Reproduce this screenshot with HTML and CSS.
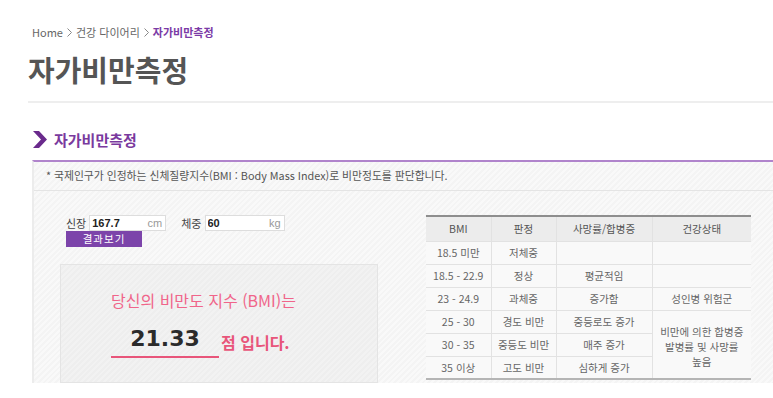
FILE: index.html
```html
<!DOCTYPE html>
<html lang="ko">
    <head>
        <meta charset="UTF-8" />
        <meta name="viewport" content="width=device-width, initial-scale=1.0" />
        <title>자가비만측정</title>
        <link rel="stylesheet" href="styles.css">
    </head>
    <body>
        <div class="page">
            <div class="breadcrumb">
                <span>Home</span>
                <svg class="sep" width="5" height="9" viewBox="0 0 5 9"><polyline points="0.5,0.5 4.5,4.5 0.5,8.5" fill="none" stroke="#888" stroke-width="1"></polyline></svg>
                <span>건강 다이어리</span>
                <svg class="sep" width="5" height="9" viewBox="0 0 5 9"><polyline points="0.5,0.5 4.5,4.5 0.5,8.5" fill="none" stroke="#888" stroke-width="1"></polyline></svg>
                <strong>자가비만측정</strong>
            </div>
            <h1 class="page-title">자가비만측정</h1>

            <div class="section">
                <h2 class="section-title">
                    <svg width="14" height="17" viewBox="0 0 14 17">
                        <polygon points="0,0 6,0 14,8.5 6,17 0,17 8,8.5" fill="#6a2a8c"></polygon>
                    </svg>
                    자가비만측정
                </h2>
                <div class="panel">
                    <p class="notice">* 국제인구가 인정하는 신체질량지수(BMI : Body Mass Index)로 비만정도를 판단합니다.</p>
                    <div class="panel-body">
                        <div class="calc">
                            <div class="form">
                                <div class="fields">
                                    <label>신장</label>
                                    <div class="field"><input type="text" value="167.7"><span class="unit">cm</span></div>
                                    <label class="gap">체중</label>
                                    <div class="field wide"><input type="text" value="60"><span class="unit">kg</span></div>
                                </div>
                                <button class="btn">결과보기</button>
                            </div>
                            <div class="result">
                                <p class="result-lead">당신의 비만도 지수 (BMI)는</p>
                                <p class="result-line"><span class="score">21.33</span><span class="tail">점 입니다.</span></p>
                            </div>
                        </div>

                        <table class="bmi-table">
                            <thead>
                                <tr>
                                    <th class="c1">BMI</th>
                                    <th class="c2">판정</th>
                                    <th class="c3">사망률/합병증</th>
                                    <th class="c4">건강상태</th>
                                </tr>
                            </thead>
                            <tbody>
                                <tr><td>18.5 미만</td><td>저체중</td><td></td><td></td></tr>
                                <tr><td>18.5 - 22.9</td><td>정상</td><td>평균적임</td><td></td></tr>
                                <tr><td>23 - 24.9</td><td>과체중</td><td>증가함</td><td>성인병 위험군</td></tr>
                                <tr><td>25 - 30</td><td>경도 비만</td><td>중등로도 증가</td><td rowspan="3">비만에 의한 합병증<br>발병률 및 사망률<br>높음</td></tr>
                                <tr><td>30 - 35</td><td>중등도 비만</td><td>매주 증가</td></tr>
                                <tr><td>35 이상</td><td>고도 비만</td><td>심하게 증가</td></tr>
                            </tbody>
                        </table>
                    </div>
                </div>
            </div>
        </div>
    </body>
</html>
```

FILE: styles.css
```css
*,
*::before,
*::after {
    box-sizing: border-box;
}

body {
    margin: 0;
    background: #fff;
    font-family: "Noto Sans CJK KR", "Noto Sans", sans-serif;
    color: #555;
    overflow: hidden;
}

.page {
    padding: 24px 0 0 28px;
}

.breadcrumb {
    display: flex;
    align-items: center;
    gap: 4px;
    padding-left: 4px;
    height: 16px;
    font-size: 11px;
    line-height: 16px;
    color: #666;
}
.breadcrumb strong {
    color: #7b3aa6;
}

.page-title {
    margin: 9px 0 0;
    padding-bottom: 12px;
    font-size: 29px;
    line-height: 40px;
    font-weight: 700;
    color: #555;
    border-bottom: 2px solid #eee;
}

.section {
    padding: 24px 0 0 4px;
}

.section-title {
    display: flex;
    align-items: center;
    gap: 7px;
    margin: 0;
    padding-left: 1px;
    height: 24px;
    font-size: 15px;
    font-weight: 700;
    color: #7a3a9e;
}

.panel {
    margin-top: 9px;
    border-top: 2px solid #b084cc;
    border-left: 2px solid #ececec;
    background: repeating-linear-gradient(135deg, #f9f9f9 0 2px, #f4f4f4 2px 4px);
}

.notice {
    margin: 0;
    padding: 5px 12px 6px;
    font-size: 10.8px;
    line-height: 17px;
    color: #555;
    border-bottom: 1px solid #e4e4e4;
}

.panel-body {
    display: flex;
    align-items: flex-start;
    gap: 48px;
    padding: 24px 0 0 26px;
}

.calc {
    width: 318px;
}

.form {
    padding-left: 6px;
}

.fields {
    display: flex;
    align-items: center;
    height: 16px;
    font-size: 11px;
    color: #444;
}
.fields label {
    margin-right: 3px;
}
.fields label.gap {
    margin-left: 15px;
}

.field {
    display: flex;
    align-items: center;
    width: 77px;
    height: 16px;
    background: #fff;
    border: 1px solid #ddd;
}
.field.wide {
    width: 80px;
}
.field input {
    flex: 1;
    min-width: 0;
    border: 0;
    padding: 0 2px;
    font-family: "Liberation Sans", Arial, sans-serif;
    font-size: 11px;
    font-weight: 700;
    color: #222;
    background: transparent;
}
.field .unit {
    padding-right: 3px;
    font-family: "Liberation Sans", Arial, sans-serif;
    font-size: 11px;
    color: #999;
}

.btn {
    display: block;
    width: 76px;
    height: 16px;
    padding: 0;
    border: 0;
    background: #7c44aa;
    color: #fff;
    font-family: inherit;
    font-size: 10.5px;
    line-height: 16px;
    letter-spacing: 1px;
}

.result {
    margin-top: 17px;
    height: 119px;
    padding: 23px 0 0 50px;
    border: 1px solid #e4e4e4;
    background: repeating-linear-gradient(135deg, #f2f2f2 0 2px, #eeeeee 2px 4px);
}

.result-lead {
    margin: 0;
    font-size: 16px;
    line-height: 24px;
    color: #f0658a;
}

.result-line {
    display: flex;
    align-items: flex-end;
    margin: 12px 0 0;
}

.score {
    display: inline-block;
    width: 108px;
    padding-bottom: 2px;
    text-align: center;
    font-family: "DejaVu Sans", sans-serif;
    font-size: 22px;
    line-height: 30px;
    font-weight: 700;
    color: #2b2b2b;
    border-bottom: 2px solid #e8557a;
}
.tail {
    margin-left: 2px;
    padding-bottom: 4px;
    font-size: 16px;
    font-weight: 700;
    color: #e8557a;
}

.bmi-table {
    width: 325px;
    border-collapse: collapse;
    border-top: 2px solid #8e8e8e;
    border-bottom: 2px solid #b5b5b5;
    font-size: 10.5px;
    color: #666;
}
.bmi-table th,
.bmi-table td {
    padding: 0;
    height: 23px;
    text-align: center;
    border: 1px solid #e2e2e2;
    font-weight: 400;
}
.bmi-table tr > :first-child {
    border-left: 0;
}
.bmi-table tr > :last-child {
    border-right: 0;
}
.bmi-table th {
    height: 25px;
    background: #ececec;
    color: #555;
}
.bmi-table td {
    background: #f9f9f9;
}
.bmi-table td[rowspan] {
    line-height: 15px;
    vertical-align: top;
    padding-top: 13px;
}
.c1 { width: 65px; }
.c2 { width: 65px; }
.c3 { width: 96px; }
```
